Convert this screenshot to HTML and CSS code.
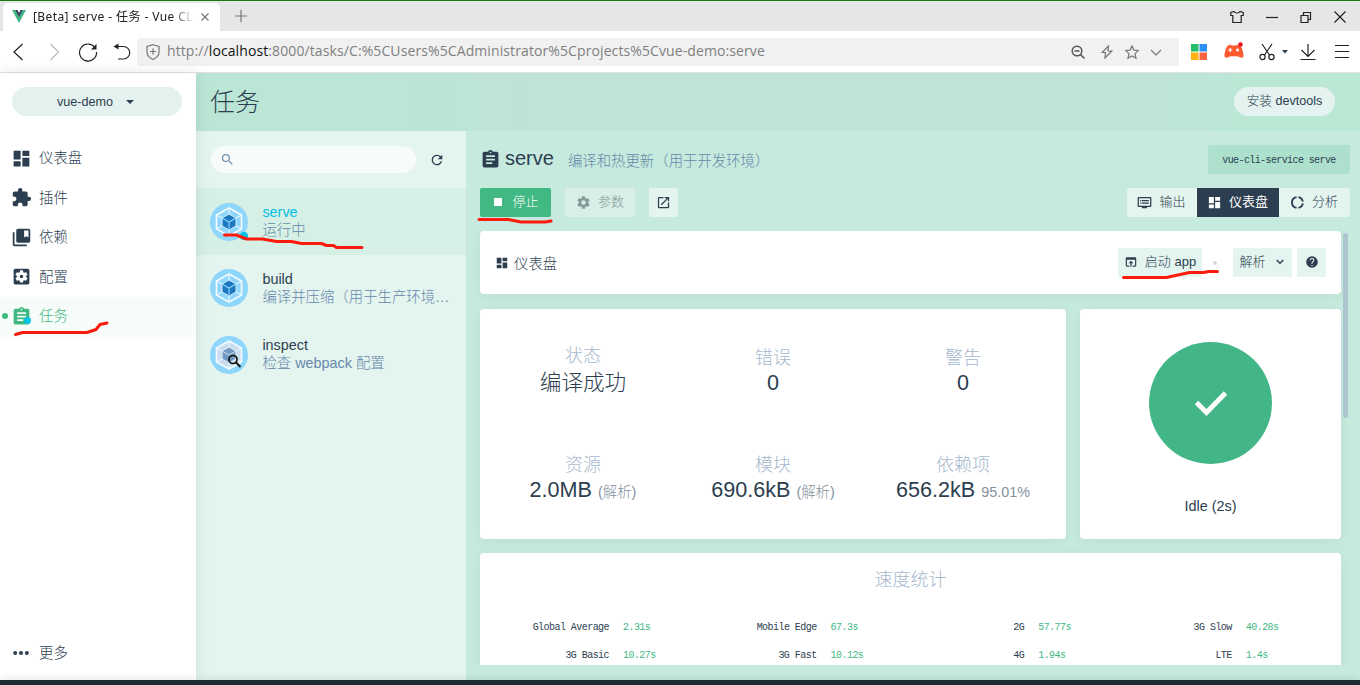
FILE: index.html
```html
<!DOCTYPE html>
<html lang="zh-CN">
<head>
  <meta charset="UTF-8">
  <meta name="viewport" content="width=device-width, initial-scale=1.0">
  <title>[Beta] serve - 任务 - Vue CLI</title>
  <link rel="stylesheet" href="styles.css">
</head>
<body>
  <!-- Shared icons -->
  <svg class="defs" width="0" height="0">
    <symbol id="dashboard" viewBox="0 0 24 24"><path d="M3 13h8V3H3v10zm0 8h8v-6H3v6zm10 0h8V11h-8v10zm0-18v6h8V3h-8z"/></symbol>
    <symbol id="extension" viewBox="0 0 24 24"><path d="M20.5 11H19V7c0-1.1-.9-2-2-2h-4V3.500a2.500 2.500 0 0 0-5 0V5H4c-1.100 0-1.990.9-1.990 2v3.800H3.500c1.490 0 2.700 1.210 2.700 2.700s-1.210 2.700-2.700 2.700H2V20c0 1.100.9 2 2 2h3.800v-1.500c0-1.490 1.210-2.700 2.700-2.700s2.700 1.210 2.700 2.700V22H17c1.100 0 2-.9 2-2v-4h1.500a2.500 2.500 0 0 0 0-5z"/></symbol>
    <symbol id="collections" viewBox="0 0 24 24"><path d="M4 6H2v14c0 1.100.9 2 2 2h14v-2H4V6zm16-4H8c-1.100 0-2 .9-2 2v12c0 1.100.9 2 2 2h12c1.100 0 2-.9 2-2V4c0-1.100-.9-2-2-2zm0 10l-2.500-1.500L15 12V4h5v8z"/></symbol>
    <symbol id="settings-app" viewBox="0 0 24 24"><path d="M12 10c-1.100 0-2 .9-2 2s.9 2 2 2 2-.9 2-2-.9-2-2-2zm7-7H5c-1.110 0-2 .9-2 2v14c0 1.100.89 2 2 2h14c1.110 0 2-.9 2-2V5c0-1.100-.89-2-2-2zm-1.750 9c0 .23-.02.460-.05.680l1.480 1.160c.13.110.17.300.08.450l-1.400 2.420c-.09.150-.27.210-.43.150l-1.740-.7c-.36.280-.76.510-1.180.690l-.26 1.850c-.03.170-.18.300-.35.300h-2.800c-.17 0-.32-.13-.35-.29l-.26-1.850c-.43-.18-.82-.41-1.180-.69l-1.740.7c-.16.060-.34 0-.43-.15l-1.400-2.420c-.09-.15-.05-.34.080-.45l1.480-1.160c-.03-.23-.05-.46-.05-.69s.02-.46.050-.68l-1.480-1.160c-.13-.11-.17-.3-.08-.45l1.400-2.420c.09-.15.270-.21.430-.15l1.740.7c.36-.28.760-.51 1.180-.69l.26-1.850c.03-.17.180-.3.350-.3h2.800c.17 0 .32.130.35.290l.26 1.850c.43.180.82.410 1.180.690l1.740-.7c.16-.06.340 0 .43.150l1.400 2.420c.09.150.05.340-.08.450l-1.480 1.160c.03.230.05.460.05.690z"/></symbol>
    <symbol id="assignment" viewBox="0 0 24 24"><path d="M19 3h-4.180C14.400 1.840 13.300 1 12 1s-2.400.84-2.820 2H5c-1.100 0-2 .9-2 2v14c0 1.100.9 2 2 2h14c1.100 0 2-.9 2-2V5c0-1.100-.9-2-2-2zm-7 0c.55 0 1 .45 1 1s-.45 1-1 1-1-.45-1-1 .45-1 1-1zm2 14H7v-2h7v2zm3-4H7v-2h10v2zm0-4H7V7h10v2z"/></symbol>
    <symbol id="more" viewBox="0 0 24 24"><circle cx="5" cy="12" r="2.400"/><circle cx="12" cy="12" r="2.400"/><circle cx="19" cy="12" r="2.400"/></symbol>
    <symbol id="search" viewBox="0 0 24 24"><path d="M15.500 14h-.79l-.28-.27A6.470 6.470 0 0 0 16 9.500 6.500 6.500 0 1 0 9.500 16c1.610 0 3.090-.59 4.230-1.570l.27.280v.79l5 4.990L20.490 19l-4.990-5zm-6 0a4.500 4.500 0 1 1 0-9 4.500 4.500 0 0 1 0 9z"/></symbol>
    <symbol id="refresh" viewBox="0 0 24 24"><path d="M17.650 6.350A7.960 7.960 0 0 0 12 4a8 8 0 1 0 7.730 10h-2.080A6 6 0 1 1 12 6c1.660 0 3.140.69 4.220 1.780L13 11h7V4l-2.350 2.350z"/></symbol>
    <symbol id="gear" viewBox="0 0 24 24"><path d="M19.430 12.980c.04-.32.070-.64.070-.98s-.03-.66-.07-.98l2.110-1.650c.19-.15.240-.42.120-.64l-2-3.460c-.12-.22-.39-.3-.61-.22l-2.490 1c-.52-.4-1.080-.73-1.690-.98l-.38-2.650A.488.488 0 0 0 14 2h-4c-.25 0-.46.180-.49.420l-.38 2.650c-.61.250-1.170.59-1.690.98l-2.490-1c-.23-.09-.49 0-.61.220l-2 3.460c-.13.220-.07.490.12.640l2.110 1.650c-.04.320-.07.650-.07.980s.03.660.07.980l-2.110 1.650c-.19.150-.24.420-.12.640l2 3.460c.12.220.39.300.61.220l2.490-1c.52.400 1.080.73 1.690.98l.38 2.650c.03.240.24.420.49.420h4c.25 0 .46-.18.490-.42l.38-2.650c.61-.25 1.170-.59 1.690-.98l2.490 1c.23.090.49 0 .61-.22l2-3.460c.12-.22.070-.49-.12-.64l-2.110-1.650zM12 15.500a3.500 3.500 0 1 1 0-7 3.500 3.500 0 0 1 0 7z"/></symbol>
    <symbol id="open" viewBox="0 0 24 24"><path d="M19 19H5V5h7V3H5a2 2 0 0 0-2 2v14a2 2 0 0 0 2 2h14c1.100 0 2-.9 2-2v-7h-2v7zM14 3v2h3.590l-9.830 9.830 1.410 1.410L19 6.410V10h2V3h-7z"/></symbol>
    <symbol id="output" viewBox="0 0 24 24"><path d="M21 3H3c-1.100 0-2 .9-2 2v12c0 1.100.9 2 2 2h5v2h8v-2h5c1.100 0 1.990-.9 1.990-2L23 5c0-1.100-.9-2-2-2zm0 14H3V5h18v12zm-2-9H8v2h11V8zm0 4H8v2h11v-2zM7 8H5v2h2V8zm0 4H5v2h2v-2z"/></symbol>
    <symbol id="donut" viewBox="0 0 24 24"><g fill="none" stroke="currentColor" stroke-width="3"><path d="M13.500 3.500a8.600 8.600 0 0 1 7 7M20.500 13.500a8.600 8.600 0 0 1-7 7M10.500 20.500A8.600 8.600 0 0 1 10.500 3.500"/></g></symbol>
    <symbol id="browser" viewBox="0 0 24 24"><path d="M19 4H5a2 2 0 0 0-2 2v12a2 2 0 0 0 2 2h4v-2H5V8h14v10h-4v2h4c1.100 0 2-.9 2-2V6a2 2 0 0 0-2-2zm-7 6l-4 4h3v6h2v-6h3l-4-4z"/></symbol>
    <symbol id="help" viewBox="0 0 24 24"><path d="M12 2a10 10 0 1 0 0 20 10 10 0 0 0 0-20zm1 17h-2v-2h2v2zm2.070-7.750l-.9.920C13.450 12.900 13 13.500 13 15h-2v-.5c0-1.100.45-2.100 1.170-2.830l1.240-1.260c.37-.36.590-.86.590-1.410a2 2 0 1 0-4 0H8a4 4 0 1 1 8 0c0 .88-.36 1.680-.93 2.250z"/></symbol>
    <symbol id="webpack" viewBox="0 0 38 38">
      <circle cx="19" cy="19" r="19" fill="#8ed6fb"/>
      <path d="M19 5l12.500 7v14L19 33 6.500 26V12z" fill="#8ed6fb" stroke="#f4fbff" stroke-width="1.700"/>
      <path d="M19 5v7M31.500 12L25 15.500M31.500 26L25 22.500M19 33v-7M6.500 26l6.500-3.500M6.500 12l6.500 3.500" stroke="#e3f5ff" stroke-width="1.300"/>
      <path d="M19 11l7 4v8l-7 4-7-4v-8z" fill="#1c78c0" stroke="#d5efff"/>
      <path d="M12 15l7 4 7-4M19 19v8" fill="none" stroke="#8ed6fb" stroke-width="1.100"/>
    </symbol>
  </svg>

  <!-- Browser window -->
  <div class="tabbar">
    <div class="tab">
      <svg width="14" height="13" viewBox="0 0 14 13"><path d="M0 0h3l4 7 4-7h3L7 13z" fill="#41b883"/><path d="M3 0h2.500L7 2.700 8.500 0H11L7 7.500z" fill="#35495e"/></svg>
      <span class="tab-title">[Beta] serve - 任务 - Vue CL</span>
      <svg class="line" width="8" height="8" viewBox="0 0 8 8"><path d="M.5.500l7 7M7.500.500l-7 7"/></svg>
    </div>
    <svg class="line new-tab" width="12" height="12" viewBox="0 0 12 12"><path d="M6 0v12M0 6h12"/></svg>
    <div class="window-buttons">
      <svg class="line dark" width="14" height="14" viewBox="0 0 14 14"><path d="M4 1.500L.8 2.500v3h2v7h8.400v-7h2v-3L10 1.500C9 3.500 5 3.500 4 1.500z"/></svg>
      <svg class="line dark" width="12" height="14" viewBox="0 0 12 14"><path d="M0 7.500h12"/></svg>
      <svg class="line dark" width="12" height="14" viewBox="0 0 12 14"><path d="M1 5.500h7v7H1zM3.500 5V2.500h7v7H8.500"/></svg>
      <svg class="line dark" width="12" height="14" viewBox="0 0 12 14"><path d="M.5 1.500l11 11M11.500 1.500l-11 11"/></svg>
    </div>
  </div>
  <div class="toolbar">
    <div class="nav-buttons">
      <svg class="line dark" width="20" height="20" viewBox="0 0 20 20"><path d="M13.500 2L5 10l8.500 8"/></svg>
      <svg class="line faded" width="20" height="20" viewBox="0 0 20 20"><path d="M6.500 2l8 8-8 8"/></svg>
      <svg class="line dark" width="20" height="20" viewBox="0 0 20 20"><path d="M17.500 6.500A8.500 8.500 0 1 0 18.500 10"/><path d="M18.500 2v5.500H13z" fill="#222" stroke="none"/></svg>
      <svg class="line dark" width="20" height="20" viewBox="0 0 20 20"><path d="M3 4.500h7.500a6.200 6.200 0 0 1 0 12.500H5"/><path d="M.5 4.500l5-3v6z" fill="#222" stroke="none"/></svg>
    </div>
    <div class="address">
      <svg class="line" width="14" height="16" viewBox="0 0 14 16"><path d="M7 .7l6 1.800v6c0 3.500-3 5.500-6 7-3-1.500-6-3.500-6-7v-6zM7 4.500v6M4 7.500h6"/></svg>
      <span class="url">http://<b>localhost</b>:8000/tasks/C:%5CUsers%5CAdministrator%5Cprojects%5Cvue-demo:serve</span>
      <div class="address-icons">
        <svg class="line zoom" width="14" height="14" viewBox="0 0 14 14"><circle cx="6" cy="6" r="4.800"/><path d="M9.500 9.500l4 4M3.500 6h5"/></svg>
        <svg class="line" width="12" height="14" viewBox="0 0 12 14"><path d="M7.500 1L1 7.500h3.500L4 13l6.800-7H7z"/></svg>
        <svg class="line" width="14" height="14" viewBox="0 0 14 14"><path d="M7 .9l1.900 4.200 4.500.5-3.400 3 1 4.600L7 10.900l-4 2.300 1-4.600-3.400-3 4.500-.5z"/></svg>
        <svg class="line" width="12" height="14" viewBox="0 0 12 14"><path d="M1 5l5 5 5-5"/></svg>
      </div>
    </div>
    <div class="tools">
      <svg width="16" height="16" viewBox="0 0 16 16"><path d="M0 0h7.500v7.500H0z" fill="#27be69"/><path d="M8.500 0H16v7.500H8.500z" fill="#2c91f5"/><path d="M0 8.500h7.500V16H0z" fill="#ffb312"/><path d="M8.500 8.500H16V16H8.500z" fill="#ff6640"/></svg>
      <svg class="gamepad" width="20" height="18" viewBox="0 0 20 18"><path d="M4 3.500c2-1.200 3-.4 4 0h4c1-.4 2-1.200 4 0 2 1.500 3.500 7 3.500 10 0 2.500-2 2.600-4 1.500-1-.4-2-.8-3-.8h-5c-1 0-2 .4-3 .8-2 1.100-4 1-4-1.500 0-3 1.500-8.500 3.500-10z" fill="#ff5a30"/><path d="M6.200 6v4M4.200 8h4" stroke="#fff" stroke-width="1.200"/><circle cx="13.500" cy="8" r="1.500" fill="#fff"/><circle cx="16.500" cy="2.500" r="2.200" fill="#e8101c"/></svg>
      <svg class="line dark" width="16" height="18" viewBox="0 0 16 18"><path d="M3 1l7.500 11M13 1L5.500 12"/><circle cx="3.500" cy="14" r="2.600"/><circle cx="12.500" cy="14" r="2.600"/></svg>
      <svg class="caret" width="6" height="4" viewBox="0 0 6 4"><path d="M0 0h6L3 3.500z"/></svg>
      <svg class="line dark" width="16" height="18" viewBox="0 0 16 18"><path d="M8 1v12M1.500 7L8 13.500 14.500 7M.5 16.500h15"/></svg>
      <svg class="line dark menu" width="14" height="16" viewBox="0 0 14 16"><path d="M0 1.500h14M0 7.500h14M0 13.500h14"/></svg>
    </div>
  </div>

  <div class="app">
    <!-- Sidebar -->
    <nav class="sidebar">
      <div class="project">vue-demo <svg width="8" height="4" viewBox="0 0 8 4"><path d="M0 0h8L4 4z"/></svg></div>
      <a class="nav-item"><svg><use href="#dashboard"/></svg>仪表盘</a>
      <a class="nav-item"><svg><use href="#extension"/></svg>插件</a>
      <a class="nav-item"><svg><use href="#collections"/></svg>依赖</a>
      <a class="nav-item"><svg><use href="#settings-app"/></svg>配置</a>
      <a class="nav-item active"><svg><use href="#assignment"/></svg>任务<i class="badge"></i></a>
      <a class="nav-item last"><svg><use href="#more"/></svg>更多</a>
    </nav>

    <div class="page">
      <header class="header">
        <h1>任务</h1>
        <button class="devtools">安装 devtools</button>
      </header>

      <div class="content">
        <!-- Task list -->
        <aside class="tasks">
          <div class="filter">
            <div class="search"><svg><use href="#search"/></svg></div>
            <svg class="reload"><use href="#refresh"/></svg>
          </div>
          <div class="task selected">
            <div class="task-icon"><svg><use href="#webpack"/></svg><i class="running"></i></div>
            <div class="task-text"><div class="name">serve</div><div class="desc">运行中</div></div>
          </div>
          <div class="task">
            <div class="task-icon"><svg><use href="#webpack"/></svg></div>
            <div class="task-text"><div class="name">build</div><div class="desc">编译并压缩（用于生产环境…</div></div>
          </div>
          <div class="task">
            <div class="task-icon">
              <svg viewBox="0 0 38 38"><circle cx="19" cy="19" r="19" fill="#8ed6fb"/><path d="M19 5l12.500 7v14L19 33 6.500 26V12z" fill="#c9dcec" stroke="#f4fbff" stroke-width="1.700"/><path d="M19 5v7M31.500 12L25 15.500M31.500 26L25 22.500M19 33v-7M6.500 26l6.500-3.500M6.500 12l6.500 3.500" stroke="#e3f5ff" stroke-width="1.300"/><path d="M19 11l7 4v8l-7 4-7-4v-8z" fill="#7199c4" stroke="#e3f0fa"/><path d="M12 15l7 4 7-4" fill="none" stroke="#c9dcec"/><circle cx="23" cy="23.500" r="4" fill="none" stroke="#111" stroke-width="1.700"/><path d="M26 26.500l4.500 4.500" stroke="#111" stroke-width="2"/></svg>
            </div>
            <div class="task-text"><div class="name">inspect</div><div class="desc">检查 webpack 配置</div></div>
          </div>
        </aside>

        <main class="details">
          <div class="task-head">
            <svg><use href="#assignment"/></svg>
            <h2>serve</h2>
            <span class="description">编译和热更新（用于开发环境）</span>
            <code class="command">vue-cli-service serve</code>
          </div>
          <div class="actions">
            <button class="btn primary"><i class="stop"></i>停止</button>
            <button class="btn disabled"><svg><use href="#gear"/></svg>参数</button>
            <button class="btn icon"><svg><use href="#open"/></svg></button>
            <div class="views">
              <button class="btn"><svg><use href="#output"/></svg>输出</button>
              <button class="btn current"><svg><use href="#dashboard"/></svg>仪表盘</button>
              <button class="btn"><svg><use href="#donut"/></svg>分析</button>
            </div>
          </div>

          <div class="view">
            <div class="card title-card">
              <svg><use href="#dashboard"/></svg>
              <span class="card-title">仪表盘</span>
              <button class="btn open-app"><svg><use href="#browser"/></svg>启动 app</button>
              <i class="separator"></i>
              <button class="btn parsed">解析<svg class="chevron" viewBox="0 0 8 6"><path d="M.7 1L4 4.300 7.300 1"/></svg></button>
              <button class="btn help"><svg><use href="#help"/></svg></button>
            </div>
            <div class="row">
              <div class="card stats">
                <div class="stat status"><label>状态</label><div class="value">编译成功</div></div>
                <div class="stat"><label>错误</label><div class="value">0</div></div>
                <div class="stat"><label>警告</label><div class="value">0</div></div>
                <div class="stat"><label>资源</label><div class="value">2.0MB <small>(解析)</small></div></div>
                <div class="stat"><label>模块</label><div class="value">690.6kB <small>(解析)</small></div></div>
                <div class="stat"><label>依赖项</label><div class="value">656.2kB <small>95.01%</small></div></div>
              </div>
              <div class="card progress">
                <div class="disc"><svg viewBox="0 0 34 26"><path d="M2.500 12.500L12.500 22.500 31.500 3"/></svg></div>
                <div class="idle">Idle (2s)</div>
              </div>
            </div>
            <div class="card speed">
              <div class="speed-title">速度统计</div>
              <div class="speeds">
                <div><span>Global Average</span><em>2.31s</em></div>
                <div><span>Mobile Edge</span><em>67.3s</em></div>
                <div><span>2G</span><em>57.77s</em></div>
                <div><span>3G Slow</span><em>40.28s</em></div>
                <div><span>3G Basic</span><em>10.27s</em></div>
                <div><span>3G Fast</span><em>10.12s</em></div>
                <div><span>4G</span><em>1.94s</em></div>
                <div><span>LTE</span><em>1.4s</em></div>
              </div>
            </div>
            <i class="scrollbar"></i>
          </div>
        </main>
      </div>
    </div>
  </div>
  <footer class="status-bar"></footer>

  <!-- Red pen marks -->
  <svg class="marks" width="1360" height="685" viewBox="0 0 1360 685">
    <path d="M15.500 334.500l7-2H87l9-3 4-5 7-1.500"/>
    <path d="M224.500 235h12l10 4h16l14 2.500h15l10 2h20l5 2h7l3 2h25.500"/>
    <path d="M479 219.500h29l13 2.500h24l6-1"/>
    <path d="M1123.500 277.500h43l23-5h14l5-1h9"/>
  </svg>
</body>
</html>
```
FILE: styles.css
```css
/* Global Styles */
* {
  box-sizing: border-box;
}

body {
  margin: 0;
  height: 685px;
  display: flex;
  flex-direction: column;
  overflow: hidden;
  position: relative;
  font-family: "Liberation Sans", "Noto Sans CJK SC", sans-serif;
  font-weight: 300;
  font-size: 14.4px;
  color: #2c3e50;
  background: #fff;
}

svg {
  display: block;
  flex: none;
  fill: currentColor;
}

button {
  font: inherit;
  color: inherit;
  border: none;
  padding: 0;
}

.defs {
  position: absolute;
}

.line {
  fill: none;
  stroke: #777;
  stroke-width: 1.2;
}

.line.dark {
  stroke: #222;
}

.line.faded {
  stroke: #bbb;
}

/* Browser */
.tabbar {
  height: 31px;
  flex: none;
  display: flex;
  align-items: flex-end;
  border-top: 1px solid #107c10;
  background: #e6e6e6;
}

.tab {
  display: flex;
  align-items: center;
  width: 217px;
  height: 28px;
  margin-left: 3px;
  padding: 0 11px 1px 9px;
  background: #fff;
  border-radius: 5px 5px 0 0;
}

.tab-title {
  width: 162px;
  margin: 0 6px 0 7px;
  flex: none;
  white-space: nowrap;
  font: 12px/18px "Noto Sans", "Noto Sans CJK SC", sans-serif;
  letter-spacing: 0.4px;
  color: #222;
  -webkit-mask-image: linear-gradient(90deg, #000 138px, transparent 162px);
  mask-image: linear-gradient(90deg, #000 138px, transparent 162px);
}

.tab > .line {
  margin-left: auto;
}

.new-tab {
  margin: 0 0 9px 15px;
}

.window-buttons {
  display: flex;
  gap: 22px;
  margin: 0 14px 7px auto;
}

.toolbar {
  height: 42px;
  flex: none;
  display: flex;
  align-items: center;
  border-bottom: 1px solid #e2e2e2;
}

.nav-buttons {
  display: flex;
  gap: 14.5px;
  width: 137px;
  padding-left: 9px;
}

.address {
  display: flex;
  align-items: center;
  width: 1042px;
  height: 28px;
  padding: 0 17px 0 9px;
  background: #f1f1f1;
  border-radius: 3px;
}

.url {
  margin: -2px 0 0 7px;
  font: 14px/20px "Open Sans", sans-serif;
  letter-spacing: 0.1px;
  color: #808080;
}

.url b {
  font-weight: 400;
  color: #111;
}

.address-icons {
  display: flex;
  gap: 11.5px;
  margin-left: auto;
}

.address-icons .line.zoom {
  stroke: #555;
  stroke-width: 1.5;
  margin-right: 5px;
}

.tools {
  display: flex;
  align-items: center;
  margin-left: 12px;
}

.gamepad {
  margin: -2px 15px 0 17px;
}

.caret {
  margin: 0 12px 0 7px;
}

.menu {
  margin-left: 19px;
}

/* App */
.app {
  display: flex;
  height: 607px;
  flex: none;
}

.sidebar {
  display: flex;
  flex-direction: column;
  position: relative;
  z-index: 1;
  width: 196px;
  padding: 14px 0 7px;
  background: #fff;
  box-shadow: 0 0 14px rgba(0, 0, 0, 0.1);
}

.project {
  display: flex;
  align-items: center;
  justify-content: center;
  gap: 13px;
  height: 29px;
  margin: 0 14px 23px 12px;
  padding-right: 3px;
  border-radius: 15px;
  background: #e4f2ef;
  font-size: 12.6px;
}

.nav-item {
  display: flex;
  align-items: center;
  position: relative;
  height: 39.5px;
  padding: 0 0 1px 11px;
  line-height: 20px;
}

.nav-item svg {
  width: 21px;
  height: 21px;
  margin-right: 7px;
}

.nav-item.active {
  background: #f5fcf9;
  color: #42b983;
}

.nav-item.active::before {
  content: "";
  position: absolute;
  left: 2px;
  width: 6px;
  height: 6px;
  border-radius: 50%;
  background: #42b983;
}

.nav-item.last {
  margin-top: auto;
}

.nav-item.last svg {
  width: 20px;
  height: 20px;
  margin-right: 8px;
}

.badge {
  position: absolute;
  left: 24px;
  top: 20px;
  width: 7px;
  height: 7px;
  border-radius: 50%;
  background: #03c2e6;
}

.page {
  width: 1164px;
}

.header {
  display: flex;
  align-items: center;
  justify-content: space-between;
  height: 58px;
  padding: 0 25px 0 14px;
  background: linear-gradient(90deg, #bbe6d6, #bbe6d5 10%, #bfe3d9 35%, #bfe3d9 80%, #bbe7d5 90%);
}

h1 {
  margin: 0;
  font-size: 25px;
  font-weight: 300;
  line-height: 36px;
}

.devtools {
  width: 101px;
  height: 29px;
  margin-top: -2px;
  border-radius: 15px;
  background: #e4f3ef;
  font-size: 12.6px;
  line-height: 29px;
}

.content {
  display: flex;
  height: 549px;
}

/* Task list */
.tasks {
  width: 270px;
  background: #e4f4ef;
}

.filter {
  display: flex;
  align-items: center;
  gap: 13px;
  height: 57px;
  padding-left: 15px;
}

.filter svg {
  width: 15px;
  height: 15px;
}

.search {
  display: flex;
  align-items: center;
  width: 205px;
  height: 27px;
  padding-left: 9px;
  border-radius: 14px;
  background: #f7fcfa;
  color: #6f8fb4;
}

.filter .reload {
  width: 16px;
  height: 16px;
}

.task {
  display: flex;
  align-items: center;
  gap: 14.4px;
  height: 66.6px;
  padding: 0 14px;
}

.task.selected {
  background: #d6f0e5;
}

.task-icon {
  position: relative;
  margin-top: 1px;
}

.task-icon svg {
  width: 38px;
  height: 38px;
}

.running {
  position: absolute;
  right: 0;
  bottom: 1px;
  width: 8px;
  height: 8px;
  border-radius: 50%;
  background: #03c2e6;
}

.task-text {
  line-height: 18px;
}

.name {
  color: #2c3e50;
}

.selected .name {
  color: #03c2e6;
}

.desc {
  white-space: nowrap;
  color: #6688aa;
}

/* Task details */
.details {
  width: 894px;
  padding: 14px 10px 0 14px;
  background: #c6eadd;
}

.task-head {
  display: flex;
  align-items: center;
  height: 29px;
}

.task-head > svg {
  width: 21px;
  height: 21px;
  margin-right: 4px;
}

h2 {
  margin: -2px 14px 0 0;
  font-size: 20px;
  font-weight: 400;
}

.description {
  color: #6688aa;
}

.command {
  margin-left: auto;
  width: 142px;
  border-radius: 2px;
  background: #ade1cd;
  text-align: center;
  font: 10px/31px "Liberation Mono", monospace;
  height: 29px;
  letter-spacing: -0.6px;
}

.actions {
  display: flex;
  gap: 14px;
  margin-top: 14px;
}

.btn {
  display: flex;
  align-items: center;
  justify-content: center;
  gap: 10px;
  height: 29px;
  padding: 0 0 1px;
  border-radius: 2px;
  background: #e4f4ef;
  font-size: 13px;
  line-height: 18px;
  white-space: nowrap;
}

.btn svg {
  width: 15px;
  height: 15px;
}

.btn.primary {
  width: 71px;
  background: #42b983;
  color: #fff;
}

.stop {
  width: 8px;
  height: 8px;
  margin-left: 2px;
  background: #fff;
}

.btn.disabled {
  width: 70px;
  gap: 7px;
  background: #d8eee6;
  color: #84999a;
}

.btn.icon {
  width: 29px;
}

.views {
  display: flex;
  margin-left: auto;
}

.views .btn {
  width: 70px;
  gap: 7px;
  padding-right: 1px;
  border-radius: 2px 0 0 2px;
}

.views .btn:last-child {
  width: 71px;
  border-radius: 0 2px 2px 0;
}

.views .btn.current {
  width: 82px;
  border-radius: 0;
  background: #2c3e50;
  color: #fff;
  font-weight: 400;
}

/* Dashboard */
.view {
  position: relative;
  width: 861px;
  height: 434px;
  margin-top: 14px;
  clip-path: inset(0 -10px 0 -10px);
}

.scrollbar {
  position: absolute;
  top: 2px;
  right: -7px;
  width: 5px;
  height: 185px;
  border-radius: 3px;
  background: #b0c4cf;
}

.card {
  border-radius: 4px;
  background: #fff;
  box-shadow: 0 2px 12px rgba(0, 70, 50, 0.06);
}

.title-card {
  display: flex;
  align-items: center;
  height: 63px;
  padding: 0 15px;
}

.title-card > svg {
  width: 14px;
  height: 14px;
  margin-right: 5px;
}

.title-card .btn svg {
  width: 14px;
  height: 14px;
}

.open-app {
  width: 84px;
  gap: 7px;
  margin-left: auto;
}

.separator {
  width: 4px;
  height: 4px;
  margin: 0 16px 0 11px;
  border-radius: 50%;
  background: #d3dae2;
}

.btn.parsed {
  width: 59px;
  padding-right: 2px;
  margin-right: 5px;
}

.title-card .btn .chevron {
  width: 8px;
  height: 6px;
  fill: none;
  stroke: #2c3e50;
  stroke-width: 1.3;
}

.btn.help {
  width: 29px;
}

.row {
  display: flex;
  gap: 14px;
  height: 230px;
  margin: 15px 0 14px;
}

.stats {
  display: grid;
  grid-template-columns: repeat(3, 190px);
  grid-template-rows: 107px 107px;
  width: 586px;
  padding: 8px;
}

.stat {
  padding-top: 28px;
  text-align: center;
}

.stat label {
  display: block;
  color: #a6b8cc;
  font-size: 18px;
  line-height: 26px;
}

.status label {
  margin-top: -2px;
  margin-bottom: 2px;
}

.value {
  font-size: 21.6px;
  line-height: 24px;
  white-space: nowrap;
}

.value small {
  font-size: 14.4px;
  color: #84919e;
}

.progress {
  display: flex;
  flex-direction: column;
  align-items: center;
  width: 261px;
  padding-top: 33px;
}

.disc {
  display: flex;
  align-items: center;
  justify-content: center;
  width: 123px;
  height: 122px;
  border-radius: 50%;
  background: #42b686;
}

.disc svg {
  width: 34px;
  height: 26px;
  fill: none;
  stroke: #fff;
  stroke-width: 4.8;
}

.idle {
  margin-top: 34px;
}

.speed {
  height: 150px;
  padding: 14px 15px;
}

.speed-title {
  color: #a6b8cc;
  font-size: 18px;
  line-height: 26px;
  text-align: center;
}

.speeds {
  display: grid;
  grid-template-columns: repeat(4, 207.6px);
  margin-top: 21px;
  font: 10px/28px "Liberation Mono", monospace;
  letter-spacing: -0.55px;
}

.speeds div {
  display: grid;
  grid-template-columns: 114px 1fr;
  gap: 14px;
}

.speeds span {
  text-align: right;
}

.speeds em {
  font-style: normal;
  color: #42b983;
}

.status-bar {
  height: 5px;
  flex: none;
  z-index: 2;
  background: #1d2a36;
  box-shadow: 0 0 8px rgba(0, 0, 0, 0.15);
}

/* Pen marks */
.marks {
  position: absolute;
  top: 0;
  left: 0;
  z-index: 3;
  fill: none;
  stroke: #fb1b0c;
  stroke-width: 3;
  stroke-linecap: round;
  stroke-linejoin: round;
}
```
